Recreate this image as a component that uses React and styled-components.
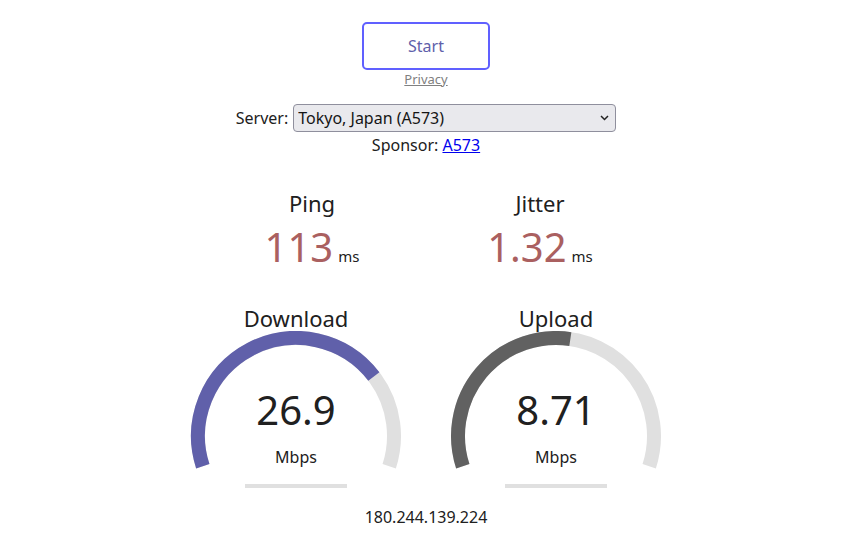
import React from "react";
import styled, { createGlobalStyle } from "styled-components";

const Global = createGlobalStyle`
  html, body { margin: 0; padding: 0; background: #ffffff; }
  body { font-family: "Noto Sans", "Open Sans", sans-serif; color: #202020; }
`;

const Page = styled.div`
  display: flex;
  flex-direction: column;
  align-items: center;
  padding-left: 3px;
`;

const StartButton = styled.button`
  margin-top: 22px;
  width: 128px;
  height: 48px;
  box-sizing: border-box;
  border: 2.4px solid #6060ff;
  border-radius: 5px;
  background: #fff;
  color: #6060aa;
  font-family: inherit;
  font-size: 16px;
  padding: 0;
`;

const Privacy = styled.a`
  font-size: 13px;
  line-height: 18px;
  color: #808080;
  text-decoration: underline;
`;

const ServerRow = styled.div`
  margin-top: 16px;
  display: flex;
  align-items: center;
  gap: 5px;
  font-size: 16px;
  height: 28px;
`;

const SelectWrap = styled.div`
  position: relative;
  width: 323px;
  height: 28px;
`;

const Select = styled.select`
  appearance: none;
  width: 100%;
  height: 100%;
  box-sizing: border-box;
  background: #e9e9ed;
  border: 1px solid #8f8f9d;
  border-radius: 4px;
  font-family: inherit;
  font-size: 16px;
  color: #151515;
  padding: 0 0 0 4px;
`;

const Chevron = styled.svg`
  position: absolute;
  right: 7px;
  top: 11px;
  pointer-events: none;
`;

const Sponsor = styled.div`
  margin-top: 1px;
  font-size: 16px;
  line-height: 24px;
  a { color: #0000ee; text-decoration: underline; }
`;

const MetricRow = styled.div`
  display: flex;
  justify-content: center;
  margin-top: ${(p) => p.$mt}px;
`;

const Metric = styled.div`
  width: ${(p) => p.$w}px;
  display: flex;
  flex-direction: column;
  align-items: center;
`;

const Label = styled.div`
  font-size: 22px;
  line-height: ${(p) => p.$lh || 30}px;
  color: #202020;
`;

const ValueLine = styled.div`
  margin-top: 6px;
  display: flex;
  align-items: baseline;
  gap: 5px;
  line-height: 46px;
`;

const BigValue = styled.span`
  font-size: 40px;
  color: #aa6060;
`;

const Unit = styled.span`
  font-size: 15px;
  color: #202020;
`;

const GaugeStack = styled.div`
  display: grid;
  width: 220px;
  height: 145px;
  > * { grid-area: 1 / 1; }
`;

const GaugeText = styled.div`
  display: flex;
  flex-direction: column;
  align-items: center;
  padding-top: 55px;
`;

const GaugeNumber = styled.div`
  font-size: 40px;
  line-height: 48px;
  color: #202020;
`;

const GaugeUnit = styled.div`
  margin-top: 13px;
  font-size: 16px;
  line-height: 20px;
  color: #202020;
`;

const Bar = styled.div`
  margin-top: 8px;
  width: 102px;
  height: 4px;
  background: #e0e0e0;
`;

const Ip = styled.div`
  margin-top: 19px;
  font-size: 16px;
  line-height: 20px;
  color: #202020;
`;

const CX = 110, CY = 105, R = 98, SW = 14;
const pt = (deg) => {
  const a = (deg * Math.PI) / 180;
  return [CX + R * Math.cos(a), CY + R * Math.sin(a)];
};
const arc = (from, to) => {
  const [x1, y1] = pt(from);
  const [x2, y2] = pt(to);
  const large = to - from > 180 ? 1 : 0;
  return `M ${x1} ${y1} A ${R} ${R} 0 ${large} 1 ${x2} ${y2}`;
};

const toAmount = (s) => 1 - 1 / Math.pow(1.3, Math.sqrt(s));

function Gauge({ label, value, color }) {
  const f = toAmount(parseFloat(value));
  return (
    <Metric $w={260}>
      <Label $lh={26}>{label}</Label>
      <GaugeStack>
        <svg width="220" height="145" viewBox="0 0 220 145">
          <path d={arc(162, 378)} fill="none" stroke="#e0e0e0" strokeWidth={SW} />
          <path d={arc(162, 162 + 216 * f)} fill="none" stroke={color} strokeWidth={SW} />
        </svg>
        <GaugeText>
          <GaugeNumber>{value}</GaugeNumber>
          <GaugeUnit>Mbps</GaugeUnit>
        </GaugeText>
      </GaugeStack>
      <Bar />
    </Metric>
  );
}

export default function App() {
  return (
    <>
      <Global />
      <Page>
        <StartButton>Start</StartButton>
        <Privacy href="#">Privacy</Privacy>
        <ServerRow>
          <span>Server:</span>
          <SelectWrap>
            <Select defaultValue="tokyo">
              <option value="tokyo">Tokyo, Japan (A573)</option>
            </Select>
            <Chevron width="9" height="6" viewBox="0 0 9 6">
              <path d="M1 1 L4.5 4.5 L8 1" fill="none" stroke="#222" strokeWidth="1.5" />
            </Chevron>
          </SelectWrap>
        </ServerRow>
        <Sponsor>
          Sponsor: <a href="#">A573</a>
        </Sponsor>
        <MetricRow $mt={31}>
          <Metric $w={228}>
            <Label>Ping</Label>
            <ValueLine>
              <BigValue>113</BigValue>
              <Unit>ms</Unit>
            </ValueLine>
          </Metric>
          <Metric $w={228}>
            <Label>Jitter</Label>
            <ValueLine>
              <BigValue>1.32</BigValue>
              <Unit>ms</Unit>
            </ValueLine>
          </Metric>
        </MetricRow>
        <MetricRow $mt={26}>
          <Gauge label="Download" value="26.9" color="#6060aa" />
          <Gauge label="Upload" value="8.71" color="#616161" />
        </MetricRow>
        <Ip>180.244.139.224</Ip>
      </Page>
    </>
  );
}
